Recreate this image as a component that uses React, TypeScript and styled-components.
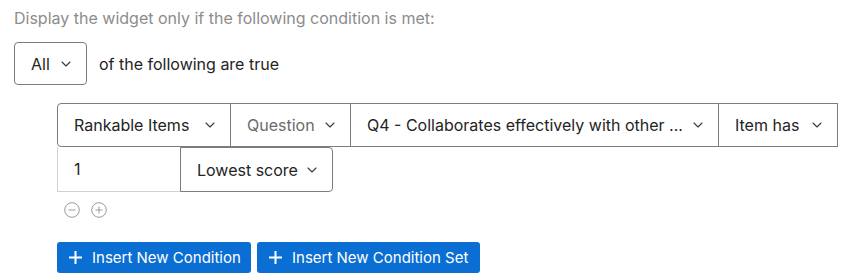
import React from "react";
import styled, { createGlobalStyle } from "styled-components";

const Global = createGlobalStyle`
  html, body { margin: 0; padding: 0; background: #fff; }
  body { font-family: Inter, "Liberation Sans", Arial, sans-serif; color: #242424; }
`;

const Page = styled.div`
  padding: 8px 0 0 14px;
  width: 836px;
`;

const Heading = styled.div`
  font-size: 16px;
  line-height: 20px;
  color: #8c8c8c;
`;

const AllRow = styled.div`
  display: flex;
  align-items: center;
  gap: 12px;
  margin-top: 14px;
`;

const Plain = styled.span`
  font-size: 16px;
  color: #242424;
`;

const Block = styled.div`
  margin-left: 43px;
  margin-top: 18px;
`;

const Row = styled.div`
  display: flex;
`;

type SelProps = { $w: number; $muted?: boolean; $radius?: string; $h?: number };

const Select = styled.div<SelProps>`
  box-sizing: border-box;
  width: ${(p) => p.$w}px;
  height: ${(p) => p.$h ?? 44}px;
  border: 1px solid #7c7c7c;
  border-radius: ${(p) => p.$radius ?? "0"};
  margin-left: -1px;
  display: flex;
  align-items: center;
  justify-content: space-between;
  padding: 0 15px 0 16px;
  font-size: 16px;
  color: ${(p) => (p.$muted ? "#6b6b6b" : "#242424")};
  background: #fff;
  white-space: nowrap;
  &:first-child { margin-left: 0; }
`;

const Input = styled.div`
  box-sizing: border-box;
  width: 124px;
  height: 45px;
  border: 1px solid #d2d2d2;
  border-top: none;
  display: flex;
  align-items: center;
  padding-left: 16px;
  font-size: 16px;
  color: #242424;
`;

const IconRow = styled.div`
  display: flex;
  gap: 11px;
  margin: 10px 0 0 7px;
`;

const Buttons = styled.div`
  display: flex;
  gap: 6px;
  margin-top: 24px;
`;

const Button = styled.button<{ $w: number }>`
  box-sizing: border-box;
  width: ${(p) => p.$w}px;
  height: 31px;
  border: none;
  border-radius: 3px;
  background: #0b6ed3;
  color: #fff;
  font-family: inherit;
  font-size: 15px;
  display: flex;
  align-items: center;
  gap: 9px;
  padding: 0 0 0 11px;
  cursor: pointer;
  white-space: nowrap;
`;

const Chevron = () => (
  <svg width="10" height="6" viewBox="0 0 10 6" fill="none">
    <path d="M1 1l4 4 4-4" stroke="#3a3a3a" strokeWidth="1.1" strokeLinecap="round" strokeLinejoin="round" />
  </svg>
);

const CircleIcon = ({ plus }: { plus?: boolean }) => (
  <svg width="16" height="16" viewBox="0 0 16 16" fill="none">
    <circle cx="8" cy="8" r="7.3" stroke="#9a9a9a" strokeWidth="1" />
    <path d="M4.5 8h7" stroke="#9a9a9a" strokeWidth="1" />
    {plus && <path d="M8 4.5v7" stroke="#9a9a9a" strokeWidth="1" />}
  </svg>
);

const Plus = () => (
  <svg width="15" height="15" viewBox="0 0 15 15" fill="none">
    <path d="M7.5 1v13M1 7.5h13" stroke="#fff" strokeWidth="2" />
  </svg>
);

export default function App() {
  return (
    <>
      <Global />
      <Page>
        <Heading>Display the widget only if the following condition is met:</Heading>
        <AllRow>
          <Select $w={73} $h={43} $radius="4px">
            All <Chevron />
          </Select>
          <Plain>of the following are true</Plain>
        </AllRow>
        <Block>
          <Row>
            <Select $w={174} $radius="4px 0 0 4px">
              Rankable Items <Chevron />
            </Select>
            <Select $w={121} $muted>
              Question <Chevron />
            </Select>
            <Select $w={369}>
              Q4 - Collaborates effectively with other ... <Chevron />
            </Select>
            <Select $w={120}>
              Item has <Chevron />
            </Select>
          </Row>
          <Row>
            <Input>1</Input>
            <Select $w={153} $h={45} $radius="0 4px 4px 0">
              Lowest score <Chevron />
            </Select>
          </Row>
          <IconRow>
            <CircleIcon />
            <CircleIcon plus />
          </IconRow>
          <Buttons>
            <Button $w={194}>
              <Plus />
              Insert New Condition
            </Button>
            <Button $w={223}>
              <Plus />
              Insert New Condition Set
            </Button>
          </Buttons>
        </Block>
      </Page>
    </>
  );
}
